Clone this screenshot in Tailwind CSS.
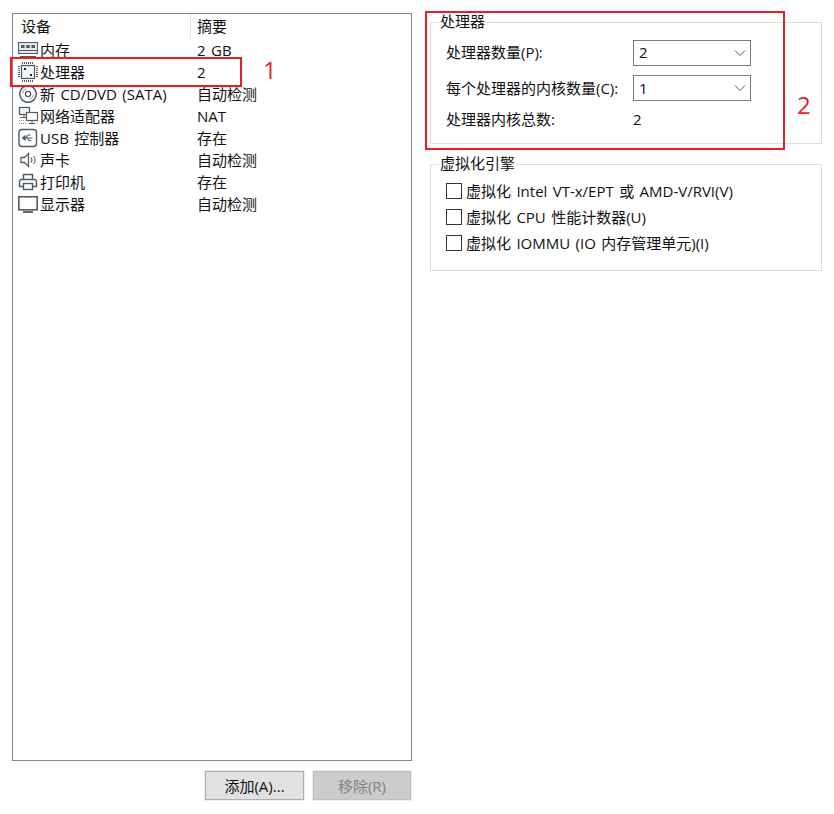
<!DOCTYPE html>
<html lang="zh-CN">
<head>
<meta charset="UTF-8">
<script src="https://cdn.jsdelivr.net/npm/@tailwindcss/browser@4"></script>
</head>
<body class="bg-white">
<div class="relative w-[834px] h-[814px] overflow-hidden flex text-[15px] leading-[20px] [word-spacing:1.5px] text-[#111] font-['Open_Sans','Noto_Sans_CJK_SC',sans-serif]">

  <!-- Device list -->
  <div class="w-[430px] pl-3 pt-[13px] shrink-0">
    <div class="w-[400px] h-[748px] border border-[#82878f]">
      <div class="flex h-[25px]">
        <div class="w-[178px] pl-2 pt-[2px] border-r border-[#e5e5e5]">设备</div>
        <div class="pl-[6px] pt-[2px]">摘要</div>
      </div>
      <div class="flex flex-col">
        <div class="flex items-center h-[22px]">
          <svg class="w-[20px] h-[18px] ml-[5px] shrink-0" viewBox="0 0 20 18" fill="none" stroke="#4f5a63"><rect x="0.5" y="1.5" width="19" height="11" fill="#e4e7ea"/><rect x="3" y="4" width="3.5" height="3" fill="#4f5a63" stroke="none"/><rect x="8.2" y="4" width="3.5" height="3" fill="#4f5a63" stroke="none"/><rect x="13.5" y="4" width="3.5" height="3" fill="#4f5a63" stroke="none"/><path d="M0.5 9.5h19M2 15.5h16"/></svg>
          <span class="w-[157px] ml-[2px]">内存</span><span>2 GB</span>
        </div>
        <div class="flex items-center h-[22px]">
          <svg class="w-[20px] h-[20px] ml-[5px] shrink-0" viewBox="0 0 20 20" fill="none" stroke="#4f5a63"><rect x="3.5" y="3.5" width="13" height="13" stroke-width="1.2" fill="#f3f5f6"/><path stroke-width="2" stroke-dasharray="1 1" d="M4 1h12M4 19h12M1 4v12M19 4v12"/><rect x="6" y="6" width="2" height="2" fill="#222" stroke="none"/><rect x="12" y="12" width="2" height="2" fill="#222" stroke="none"/></svg>
          <span class="w-[157px] ml-[2px]">处理器</span><span>2</span>
        </div>
        <div class="flex items-center h-[22px]">
          <svg class="w-[20px] h-[20px] ml-[5px] shrink-0" viewBox="0 0 20 20" fill="none" stroke="#4f5a63"><circle cx="10" cy="10" r="8.3" stroke-width="1.5"/><circle cx="10" cy="10" r="2.6" stroke-width="1.3"/><path d="M4.5 9a5.5 5.5 0 0 1 4-4.3M15.5 11a5.5 5.5 0 0 1-4 4.3" stroke="#8f979d"/></svg>
          <span class="w-[157px] ml-[2px]">新 CD/DVD (SATA)</span><span>自动检测</span>
        </div>
        <div class="flex items-center h-[22px]">
          <svg class="w-[20px] h-[20px] ml-[5px] shrink-0" viewBox="0 0 20 20" fill="none" stroke="#4f5a63"><rect x="1.5" y="1.5" width="10" height="7" fill="#eef0f2" stroke-width="1.2"/><path d="M6 8.5v3M2 11.5h6"/><rect x="8.5" y="6.5" width="11" height="8" fill="#fff" stroke-width="1.2"/><path d="M14 14.5v3M11 17.5h6"/><path d="M1 14.5h6M1 17.5h8" stroke-dasharray="1 1" stroke="#8f979d"/></svg>
          <span class="w-[157px] ml-[2px]">网络适配器</span><span>NAT</span>
        </div>
        <div class="flex items-center h-[22px]">
          <svg class="w-[20px] h-[20px] ml-[5px] shrink-0" viewBox="0 0 20 20" fill="none" stroke="#4f5a63"><rect x="1" y="1.5" width="17.5" height="17" rx="3" stroke-width="1.4"/><path d="M4.5 10h10M4.5 10l2.5-2v4zM8 10l2-3h2.5M9.5 10l1.5 2.5h2" stroke-width="1.1"/></svg>
          <span class="w-[157px] ml-[2px]">USB 控制器</span><span>存在</span>
        </div>
        <div class="flex items-center h-[22px]">
          <svg class="w-[20px] h-[20px] ml-[5px] shrink-0" viewBox="0 0 20 20" fill="none" stroke="#4f5a63"><path d="M3 7.5h3.5l4-4v13l-4-4H3z" stroke-width="1.3"/><path d="M13 7.5a4 4 0 0 1 0 5M15.5 6a6 6 0 0 1 0 8" stroke-width="1.1"/></svg>
          <span class="w-[157px] ml-[2px]">声卡</span><span>自动检测</span>
        </div>
        <div class="flex items-center h-[22px]">
          <svg class="w-[20px] h-[20px] ml-[5px] shrink-0" viewBox="0 0 20 20" fill="none" stroke="#4f5a63" stroke-width="1.4"><path d="M5.5 7.5v-5h9v5"/><path d="M5 14.5H1.5v-5a2 2 0 0 1 2-2h13a2 2 0 0 1 2 2v5H15"/><rect x="5.5" y="11.5" width="9" height="6"/></svg>
          <span class="w-[157px] ml-[2px]">打印机</span><span>存在</span>
        </div>
        <div class="flex items-center h-[22px]">
          <svg class="w-[20px] h-[20px] ml-[5px] shrink-0" viewBox="0 0 20 20" fill="none" stroke="#4f5a63"><rect x="0.8" y="2.8" width="18.4" height="13" stroke-width="1.6"/><path d="M5 18h10" stroke-width="1.8"/></svg>
          <span class="w-[157px] ml-[2px]">显示器</span><span>自动检测</span>
        </div>
      </div>
    </div>
    <div class="flex justify-end gap-[9px] w-[399px] mt-[10px]">
      <button class="w-[99px] h-[29px] bg-[#e1e1e1] border border-[#adadad] outline outline-[#ececec]">添加(A)...</button>
      <button class="w-[98px] h-[29px] bg-[#cccccc] border border-[#bfbfbf] text-[#838383] outline outline-[#ececec]">移除(R)</button>
    </div>
  </div>

  <!-- Settings column -->
  <div class="w-[392px] pt-[12px] flex flex-col gap-[10px] shrink-0">
    <fieldset class="h-[132px] border border-[#dcdcdc] pl-[15px]">
      <legend class="-ml-[7px] px-[1px] h-[20px] leading-[18px]">处理器</legend>
      <div class="flex items-center h-[26px] mt-[8px]">
        <span class="w-[187px] pb-[2px]">处理器数量(P):</span>
        <div class="w-[118px] h-[26px] border border-[#7a7a7a] flex items-center justify-between pl-[5px] pr-[4px]">
          <span class="pb-[2px]">2</span>
          <svg class="w-[12px] h-[8px]" viewBox="0 0 12 8" fill="none" stroke="#555"><path d="M1 1.5l5 5 5-5"/></svg>
        </div>
      </div>
      <div class="flex items-center h-[26px] mt-[9px]">
        <span class="w-[187px]">每个处理器的内核数量(C):</span>
        <div class="w-[118px] h-[26px] border border-[#7a7a7a] flex items-center justify-between pl-[5px] pr-[4px]">
          <span class="text-[#00005a]">1</span>
          <svg class="w-[12px] h-[8px]" viewBox="0 0 12 8" fill="none" stroke="#555"><path d="M1 1.5l5 5 5-5"/></svg>
        </div>
      </div>
      <div class="flex items-center h-[26px] mt-[5px]">
        <span class="w-[187px]">处理器内核总数:</span>
        <span>2</span>
      </div>
    </fieldset>
    <fieldset class="h-[117px] border border-[#dcdcdc] pl-[15px]">
      <legend class="-ml-[7px] px-[1px] h-[20px] leading-[18px]">虚拟化引擎</legend>
      <div class="flex items-center h-[26px] mt-[4px]"><span class="w-[16px] h-[16px] border border-[#333] mr-[4px]"></span>虚拟化 Intel VT-x/EPT 或 AMD-V/RVI(V)</div>
      <div class="flex items-center h-[26px]"><span class="w-[16px] h-[16px] border border-[#333] mr-[4px]"></span>虚拟化 CPU 性能计数器(U)</div>
      <div class="flex items-center h-[26px]"><span class="w-[16px] h-[16px] border border-[#333] mr-[4px]"></span>虚拟化 IOMMU (IO 内存管理单元)(I)</div>
    </fieldset>
  </div>

  <!-- Red annotations lying over the dialog -->
  <div class="absolute left-[10px] top-[57px] w-[232px] h-[30px] border-2 border-[#ed1c24]"></div>
  <div class="absolute left-[263px] top-[54px] text-[24px] leading-[32px] text-[#ed1c24]">1</div>
  <div class="absolute left-[425px] top-[11px] w-[360px] h-[139px] border-2 border-[#ed1c24]"></div>
  <div class="absolute left-[797px] top-[89px] text-[24px] leading-[32px] text-[#ed1c24]">2</div>
</div>
</body>
</html>
